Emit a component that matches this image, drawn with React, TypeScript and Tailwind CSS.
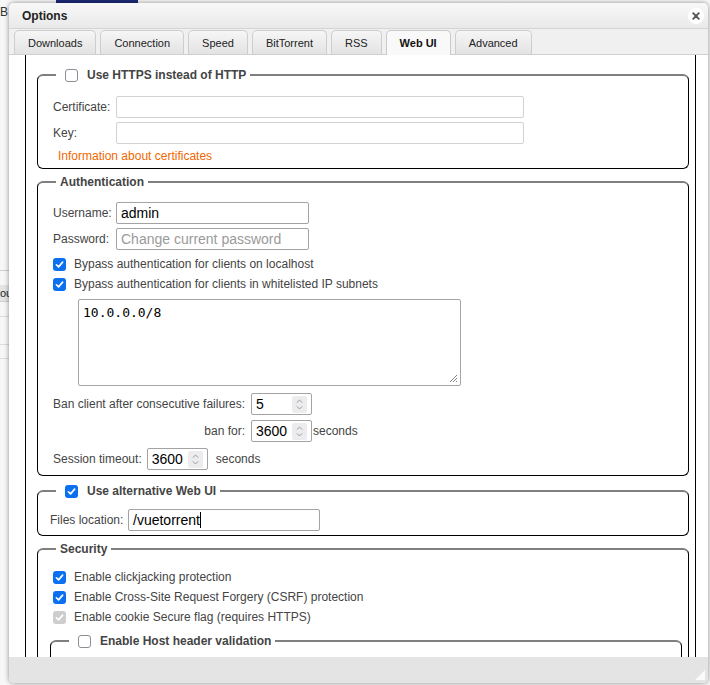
import React from "react";

// Options dialog (Web UI tab) drawn over the torrent list

function Checkbox({ checked = false, disabled = false }: { checked?: boolean; disabled?: boolean }) {
  if (!checked) {
    return <span className="inline-block h-[13px] w-[13px] shrink-0 rounded-[3px] border-[1.5px] border-[#8d8d96] bg-white" />;
  }
  return (
    <span
      className={
        disabled
          ? "inline-flex h-[13px] w-[13px] shrink-0 items-center justify-center rounded-[3px] bg-[#cdcdcd]"
          : "inline-flex h-[13px] w-[13px] shrink-0 items-center justify-center rounded-[3px] bg-[#0b70f0]"
      }
    >
      <svg viewBox="0 0 12 12" className="h-[11px] w-[11px]">
        <path d="M2.6 6.3 L5 8.6 L9.4 3.4" fill="none" stroke="white" strokeWidth="1.8" strokeLinecap="round" strokeLinejoin="round" />
      </svg>
    </span>
  );
}

function Legend({ children, check }: { children: React.ReactNode; check?: "on" | "off" }) {
  return (
    <legend className="ml-[6px] px-[4px]">
      <span className="flex h-[16px] items-center text-[12px] font-bold text-[#444]">
        {check && (
          <span className="ml-[5px] mr-[9px] flex">
            <Checkbox checked={check === "on"} />
          </span>
        )}
        {children}
      </span>
    </legend>
  );
}

function TextBox({ width, value, placeholder, light, caret }: { width: string; value?: string; placeholder?: string; light?: boolean; caret?: boolean }) {
  return (
    <div
      className={
        light
          ? `flex h-[22px] items-center rounded-[2px] border border-[#d2d2d2] bg-white px-[4px] ${width}`
          : `flex h-[22px] items-center rounded-[2px] border border-[#a3a3a3] bg-white px-[4px] ${width}`
      }
    >
      {value && <span className="text-[14px] leading-none text-black">{value}</span>}
      {caret && <span className="h-[16px] w-px bg-black" />}
      {placeholder && <span className="text-[14px] leading-none text-[#9a9a9a]">{placeholder}</span>}
    </div>
  );
}

function NumberBox({ value }: { value: string }) {
  return (
    <div className="flex h-[22px] w-[61px] shrink-0 items-center rounded-[2px] border border-[#a3a3a3] bg-white pl-[4px] pr-[4px]">
      <span className="flex-1 text-[14px] leading-none text-black">{value}</span>
      <span className="flex h-[17px] w-[15px] items-center justify-center rounded-[2px] bg-[#ececef]">
        <svg viewBox="0 0 10 14" className="h-[13px] w-[9px]">
          <path d="M2 5 L5 2 L8 5" fill="none" stroke="#9b9b9b" strokeWidth="1.1" />
          <path d="M2 9 L5 12 L8 9" fill="none" stroke="#9b9b9b" strokeWidth="1.1" />
        </svg>
      </span>
    </div>
  );
}

function CheckRow({ label, checked, disabled }: { label: string; checked?: boolean; disabled?: boolean }) {
  return (
    <div className="flex h-[20px] items-center whitespace-nowrap text-[12px] text-[#444]">
      <span className="mr-[8px] flex">
        <Checkbox checked={checked} disabled={disabled} />
      </span>
      {label}
    </div>
  );
}

const fieldsetCls =
  "rounded-[6px] border border-black border-t-2 border-t-[#7f7f7f] pl-[12px] pr-[6px]";

const TABS = ["Downloads", "Connection", "Speed", "BitTorrent", "RSS", "Web UI", "Advanced"];

export default function App() {
  return (
    <div className="relative flex h-[685px] w-[710px] flex-col overflow-hidden bg-[#f7f7f7] font-['Liberation_Sans',Arial,sans-serif]">
      {/* page behind the dialog */}
      <div className="flex h-[3px] shrink-0">
        <div className="ml-[56px] w-[82px] bg-[#1d2b78]" />
      </div>
      <div className="flex w-[9px] flex-1 flex-col overflow-hidden">
        <div className="mt-[2px] text-[12px] leading-[14px] text-[#333]">B</div>
        <div className="mt-[251px] h-px bg-[#cfcfcf]" />
        <div className="mt-[14px] flex h-[16px] items-center bg-[#e4e4e4] text-[11px] text-[#222]">ou</div>
        <div className="h-px bg-[#cfcfcf]" />
        <div className="mt-[14px] h-px bg-[#dddddd]" />
        <div className="mt-[27px] h-px bg-[#dddddd]" />
        <div className="mt-[13px] h-px bg-[#dddddd]" />
      </div>

      {/* dialog window */}
      <div className="absolute left-[9px] top-[3px] flex h-[680px] w-[699px] flex-col rounded-[5px] bg-white shadow-[0_0_5px_rgba(0,0,0,0.45)]">
        {/* title bar */}
        <div className="flex h-[26px] shrink-0 items-center justify-between rounded-t-[5px] border-b border-[#d4d4d4] bg-linear-to-b from-[#f8f8f8] to-[#e9e9e9] pl-[13px] pr-[4px]">
          <span className="text-[12px] font-bold text-[#222]">Options</span>
          <span className="flex h-[16px] w-[16px] items-center justify-center rounded-full bg-white">
            <svg viewBox="0 0 8 8" className="h-[8px] w-[8px]">
              <path d="M1.2 1.2 L6.8 6.8 M6.8 1.2 L1.2 6.8" stroke="#555" strokeWidth="1.9" strokeLinecap="round" />
            </svg>
          </span>
        </div>

        {/* tabs */}
        <div className="flex h-[26px] shrink-0 items-end gap-[4px] border-b border-[#d0d0d0] bg-[#f0f0f0] pl-[5px]">
          {TABS.map((t) =>
            t === "Web UI" ? (
              <div
                key={t}
                className="-mb-px flex h-[25px] items-center rounded-t-[5px] border border-b-0 border-[#c9c9c9] bg-[#f9f9f9] px-[13px] pt-px text-[11px] font-bold text-[#111]"
              >
                {t}
              </div>
            ) : (
              <div
                key={t}
                className="flex h-[24px] items-center rounded-t-[5px] border border-b-0 border-[#cdcdcd] bg-linear-to-b from-[#f6f6f6] to-[#e3e3e3] px-[13px] pt-px text-[11px] text-[#222]"
              >
                {t}
              </div>
            )
          )}
        </div>

        {/* body */}
        <div className="flex min-h-0 flex-1 pl-[16px] pr-[12px]">
          <div className="flex-1 overflow-hidden border-x border-black bg-white">
            {/* HTTPS */}
            <fieldset className={`ml-[11px] mr-[6px] mt-[12px] pb-[4px] pt-[13px] ${fieldsetCls}`}>
              <Legend check="off">Use HTTPS instead of HTTP</Legend>
              <div className="pl-[3px] text-[12px] text-[#444]">
                <div className="flex items-center">
                  <span className="w-[63px]">Certificate:</span>
                  <TextBox width="w-[408px]" light />
                </div>
                <div className="mt-[4px] flex items-center">
                  <span className="w-[63px]">Key:</span>
                  <TextBox width="w-[408px]" light />
                </div>
                <div className="ml-[5px] mt-[4px] leading-[16px] text-[#f06800]">Information about certificates</div>
              </div>
            </fieldset>

            {/* Authentication */}
            <fieldset className={`ml-[11px] mr-[6px] mt-[5px] pb-[5px] pt-[12px] ${fieldsetCls}`}>
              <Legend>Authentication</Legend>
              <div className="pl-[3px] text-[12px] text-[#444]">
                <div className="flex items-center">
                  <span className="w-[63px]">Username:</span>
                  <TextBox width="w-[193px]" value="admin" />
                </div>
                <div className="mt-[4px] flex items-center">
                  <span className="w-[63px]">Password:</span>
                  <TextBox width="w-[193px]" placeholder="Change current password" />
                </div>
                <div className="mt-[4px]">
                  <CheckRow checked label="Bypass authentication for clients on localhost" />
                  <CheckRow checked label="Bypass authentication for clients in whitelisted IP subnets" />
                </div>
                <div className="ml-[25px] mt-[5px] flex h-[87px] w-[383px] flex-col rounded-[2px] border border-[#a5a5a5] bg-white pl-[4px] pr-[2px] pb-[2px] pt-[5px]">
                  <span className="font-['DejaVu_Sans_Mono',monospace] text-[13px] leading-[16px] text-black">10.0.0.0/8</span>
                  <svg viewBox="0 0 10 10" className="mt-auto h-[10px] w-[10px] self-end">
                    <path d="M9 2 L2 9 M9 5 L5 9 M9 8 L8 9" stroke="#777" strokeWidth="0.9" />
                  </svg>
                </div>
                <div className="mt-[7px] flex items-center whitespace-nowrap">
                  <span className="w-[192px] shrink-0">Ban client after consecutive failures:</span>
                  <span className="ml-[6px]">
                    <NumberBox value="5" />
                  </span>
                </div>
                <div className="mt-[5px] flex items-center whitespace-nowrap">
                  <span className="w-[192px] shrink-0 text-right">ban for:</span>
                  <span className="ml-[6px]">
                    <NumberBox value="3600" />
                  </span>
                  <span className="ml-[1px]">seconds</span>
                </div>
                <div className="mt-[6px] flex items-center whitespace-nowrap">
                  <span>Session timeout:</span>
                  <span className="ml-[5px]">
                    <NumberBox value="3600" />
                  </span>
                  <span className="ml-[8px]">seconds</span>
                </div>
              </div>
            </fieldset>

            {/* Alternative Web UI */}
            <fieldset className={`ml-[11px] mr-[6px] mt-[7px] pb-[4px] pt-[10px] ${fieldsetCls}`}>
              <Legend check="on">Use alternative Web UI</Legend>
              <div className="flex items-center text-[12px] text-[#444]">
                <span className="w-[78px]">Files location:</span>
                <TextBox width="w-[192px]" value="/vuetorrent" caret />
              </div>
            </fieldset>

            {/* Security */}
            <fieldset className={`ml-[11px] mr-[6px] mt-[5px] pb-[6px] pt-[10px] ${fieldsetCls}`}>
              <Legend>Security</Legend>
              <div className="pl-[3px]">
                <CheckRow checked label="Enable clickjacking protection" />
                <CheckRow checked label="Enable Cross-Site Request Forgery (CSRF) protection" />
                <CheckRow checked disabled label="Enable cookie Secure flag (requires HTTPS)" />
              </div>
              <fieldset className={`mt-[6px] pb-[6px] pt-[10px] ${fieldsetCls}`}>
                <Legend check="off">Enable Host header validation</Legend>
                <div className="flex items-center text-[12px] text-[#444]">
                  <span className="w-[100px]">Server domains:</span>
                  <TextBox width="w-[193px]" light />
                </div>
              </fieldset>
            </fieldset>
          </div>
        </div>

        {/* footer */}
        <div className="flex h-[26px] shrink-0 items-end justify-end rounded-b-[5px] bg-[#e4e4e4] pb-[3px] pr-[3px]">
          <svg viewBox="0 0 10 10" className="h-[10px] w-[10px]">
            <path d="M10 0 L10 10 L0 10 Z" fill="#fafafa" />
          </svg>
        </div>
      </div>
    </div>
  );
}
